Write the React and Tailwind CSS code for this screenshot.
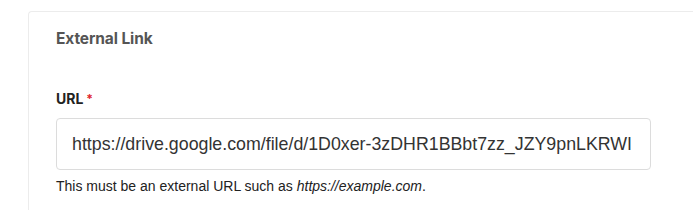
export default function App() {
  return (
    <div className="w-[697px] h-[222px] bg-white overflow-hidden pt-[11px] pl-[28px]" style={{ fontFamily: '"Liberation Sans", Arial, sans-serif' }}>
      <div className="w-[665px] h-[199px] border-l border-t border-[#ececec] rounded-tl-[4px] pl-[27px] pt-[17px]">
        <h2 className="text-[15.5px] leading-[20px] font-bold text-[#555] font-['Inter',sans-serif] tracking-[-0.1px]">External Link</h2>
        <div className="mt-[42px] flex items-start text-[14px] leading-[16px] font-bold text-[#222] font-['Inter',sans-serif]">
          URL<span className="text-[#e0242b] ml-[3px] text-[12px]">*</span>
        </div>
        <div className="mt-[11px] w-[595px] h-[52px] border border-[#dcdcdc] rounded-[4px] flex items-center pl-[15px] text-[17.8px] text-[#333] whitespace-nowrap overflow-hidden">
          https://drive.google.com/file/d/1D0xer-3zDHR1BBbt7zz_JZY9pnLKRWI
        </div>
        <p className="mt-[7px] text-[14px] leading-[18px] text-[#222]">
          This must be an external URL such as <em>https://example.com</em>.
        </p>
      </div>
    </div>
  );
}
